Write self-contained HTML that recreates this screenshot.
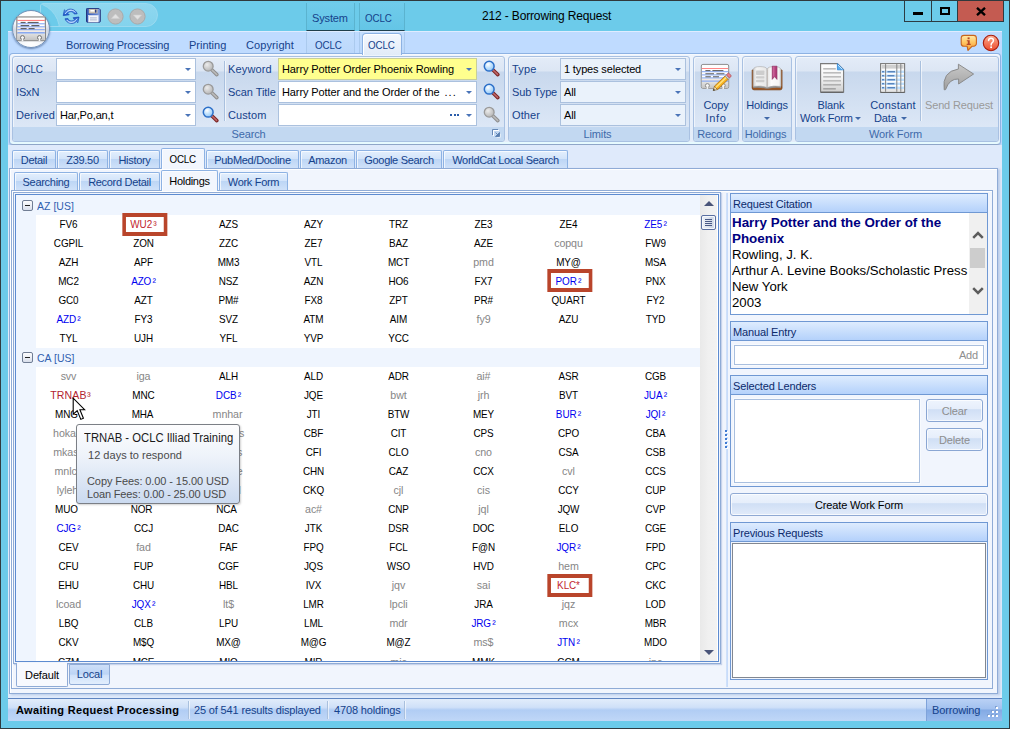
<!DOCTYPE html>
<html>
<head>
<meta charset="utf-8">
<title>212 - Borrowing Request</title>
<style>
*{box-sizing:border-box;margin:0;padding:0}
html,body{width:1010px;height:729px;overflow:hidden}
body{position:relative;background:#6ccbea;font-family:"Liberation Sans",sans-serif;font-size:11px;color:#15428b;line-height:13px}
.abs{position:absolute}
.t{position:absolute;white-space:nowrap;font-size:11px;letter-spacing:-.15px;line-height:13px;height:13px}
.k{color:#000}
/* window frame */
#frame{left:0;top:0;width:1010px;height:729px;border:1px solid #2f3b40;border-top-color:#30383c}
#client{left:8px;top:31px;width:994px;height:690px;background:#bfdbff}
/* ribbon */
#rpanel{left:9px;top:53px;width:992px;height:92px;border:1px solid #8db2e3;border-bottom-color:#8fa6c8;border-radius:4px;background:linear-gradient(#eef4fc,#e3ecf9);box-shadow:inset 0 -2px 0 #e6fafe,inset 0 1px 0 #f6f9fe,0 1px 1px rgba(150,170,205,.55)}
.grp{position:absolute;top:56px;height:86px;border:1px solid #a9c1e2;border-radius:3px;background:linear-gradient(#e3ecf8 0,#dce6f4 14px,#c8d8ed 15px,#dce7f6 70px);box-shadow:inset 1px 1px 0 rgba(255,255,255,.55)}
.grp .cap{position:absolute;left:0;right:0;bottom:0;height:14px;background:#c2d8f1;border-radius:0 0 2px 2px;text-align:center;font-size:11px;letter-spacing:-.15px;line-height:14px;color:#3e6aaa;padding-right:3px}
.cb{position:absolute;height:22px;border:1px solid #abc1de;background:#fff}
.cb.lim{background:#eaf2fb}
.cb .arr{position:absolute;right:4px;top:9px;width:0;height:0;border-left:3px solid transparent;border-right:3px solid transparent;border-top:3px solid #4a74b8}
.cb .v{position:absolute;left:3px;top:4px;font-size:11px;letter-spacing:-.15px;line-height:13px;color:#000;white-space:nowrap}
.vsep{position:absolute;width:1px;background:#a9c0de;box-shadow:1px 0 0 rgba(255,255,255,.6)}
.darr{width:0;height:0;border-left:3px solid transparent;border-right:3px solid transparent;border-top:3px solid #4068a8}

#main{left:8px;top:145px;width:994px;height:553px;background:#dfeafb}
.pnl{position:absolute;border:1px solid #8fabd6;background:#f1f5fd;box-shadow:inset 1px 1px 0 #fff}
.gh{position:absolute;border:1px solid #6f98d3;background:#f1f5fd}
.gh>.h{position:absolute;left:0;right:0;top:0;height:19px;background:linear-gradient(#deecfe,#b4d1fb);border-bottom:1px solid #6f98d3;padding:4px 0 0 2px;font-size:11px;letter-spacing:-.15px;color:#0c2a6b;white-space:nowrap}
.btn{position:absolute;border:1px solid #8aa6d3;border-radius:3px;background:linear-gradient(#eef4fd 0,#e6eefb 42%,#d0dff5 46%,#e1ebfa 100%);text-align:center;font-size:11px;letter-spacing:-.15px;box-shadow:inset 0 0 0 1px rgba(255,255,255,.7)}
#status{left:8px;top:698px;width:994px;height:23px;border-top:1px solid #5f84c1;background:linear-gradient(#e2edfb 0,#cfe0f8 38%,#b1cdf4 50%,#c0d7f7 100%)}

#list .band{position:absolute;left:0;width:684px;height:20px;background:#eff5fe}
#list .ind{position:absolute;left:0;top:0;width:20px;height:466px;background:#eff5fe}
#list .gt{position:absolute;left:21px;font-size:11px;letter-spacing:.05px;color:#2f5fb0;white-space:nowrap;transform:scaleX(.95);transform-origin:0 50%}
#list .mb{position:absolute;left:6px;width:11px;height:11px;border:1px solid #707d94;border-radius:2px;background:linear-gradient(#fdfdfe,#d9dfec)}
#list .mb:after{content:"";position:absolute;left:2px;top:4px;width:5px;height:1px;background:#222}
.r{position:absolute;left:20px;height:19px;width:664px;display:flex}
.r i{display:block;font-style:normal;width:85px;height:19px;line-height:19px;text-align:center;color:#000;font-size:11px;letter-spacing:-.1px;white-space:nowrap;position:relative;transform:scaleX(.9)}
.r i:first-child{width:65px}
.r i:last-child{width:89px}
.r i.b{color:#0000f0}
.r i.g{color:#868686;transform:scaleX(.97)}
.r i.rd{color:#c2262f}
.r i.bx:before{content:"";position:absolute;left:50%;top:-2px;margin-left:-23.9px;width:50px;height:23px;border:4px solid #b9452b;border-left-width:4.44px;border-right-width:4.44px;box-sizing:border-box}
.r i.bx{z-index:2}
.r i b{font-weight:normal;margin-left:1.4px;font-size:11.5px;line-height:0;position:relative;top:1px}
.r i.up:before{top:-3px}
.r i.hov{transform:scaleX(.96);left:2px;letter-spacing:.1px;color:#b2222f}
.r i.hov b{margin-left:.3px}
.cx{display:inline-block;transform:scaleX(.89);transform-origin:0 50%}
/* tabs */
.tab{position:absolute;border:1px solid #8db2e3;border-bottom:none;border-radius:2px 2px 0 0;background:linear-gradient(#e3effd 0,#d3e4fa 45%,#bcd5f5 46%,#cfe1f9 100%);text-align:center;font-size:11px;letter-spacing:-.3px;color:#15428b;box-shadow:inset 1px 1px 0 rgba(255,255,255,.7)}
.tab.sel{background:#f2f6fd;color:#000;z-index:3}
</style>
</head>
<body>
<div id="frame" class="abs"></div>
<div id="client" class="abs"></div>


<!-- TITLE BAR -->
<div class="abs" id="qat" style="left:40px;top:3px;width:118px;height:24px;border-radius:3px 12px 12px 3px;background:linear-gradient(#8fd7ef,#84d3ed);border:1px solid #9adaf0;overflow:hidden"><div class="abs" style="left:-37px;top:-2px;width:56px;height:56px;border-radius:50%;background:#6ccbea;border:1px solid #9adaf0"></div></div>
<!-- refresh icon -->
<svg class="abs" style="left:62px;top:7px" width="18" height="18" viewBox="0 0 18 18">
 <defs><linearGradient id="gr" x1="0" y1="0" x2="0" y2="1"><stop offset="0" stop-color="#9cc6fa"/><stop offset=".5" stop-color="#3f7fe0"/><stop offset="1" stop-color="#1b50c2"/></linearGradient></defs>
 <g id="ra"><path d="M15.2 6.8 C13.6 1.8 6.6 .6 3.8 4.2 L2.4 2.8 L1.2 8.6 L7.2 7.8 L5.6 6.2 C7.8 3.8 11.4 4.4 12.2 7 Z" fill="url(#gr)" stroke="#1747b4" stroke-width=".7" stroke-linejoin="round"/>
 <path d="M3 7 L4.6 5.2 C7 2.6 11.6 2.6 13.4 5.6" fill="none" stroke="#d6e8ff" stroke-width=".9"/></g>
 <use href="#ra" transform="rotate(180 9.1 9.3)"/>
</svg>
<!-- save icon -->
<svg class="abs" style="left:86px;top:8px" width="15" height="15" viewBox="0 0 15 15">
 <defs><linearGradient id="gsv" x1="0" y1="0" x2="1" y2="0"><stop offset="0" stop-color="#3558b4"/><stop offset=".7" stop-color="#5b7fd0"/><stop offset="1" stop-color="#93aee6"/></linearGradient></defs>
 <path d="M.5 1.2 a.8 .8 0 0 1 .8-.8 h11.6 l1.4 1.4 v11.6 a.8 .8 0 0 1 -.8 .8 h-12.2 a.8 .8 0 0 1 -.8-.8 z" fill="url(#gsv)" stroke="#24357c" stroke-width="1"/>
 <rect x="2.8" y="1" width="8.8" height="4.4" fill="#cbbfae"/><rect x="4.4" y="2" width="4" height="1.6" fill="#fff"/><rect x="9" y="1.6" width="1.4" height="3" fill="#2a3f86"/>
 <rect x="2.6" y="7.4" width="9.6" height="6.6" fill="#f4f6fb" stroke="#dfe5f3" stroke-width=".6"/><rect x="4" y="9.4" width="6.8" height="1" fill="#a9b3cc"/><rect x="4" y="11.4" width="6.8" height="1" fill="#a9b3cc"/>
</svg>
<!-- up/down disabled -->
<svg class="abs" style="left:106.5px;top:7.5px" width="17" height="17" viewBox="0 0 17 17"><circle cx="8.5" cy="8.5" r="7.6" fill="#bdbdbd" stroke="#a9a9a9"/><path d="M4.4 10.4 L8.5 6 L12.6 10.4 Z" fill="#e2e2e2" stroke="#d0d0d0" stroke-width=".6"/></svg>
<svg class="abs" style="left:128.5px;top:7.5px" width="17" height="17" viewBox="0 0 17 17"><circle cx="8.5" cy="8.5" r="7.6" fill="#bdbdbd" stroke="#a9a9a9"/><path d="M4.4 7 L8.5 11.4 L12.6 7 Z" fill="#e2e2e2" stroke="#d0d0d0" stroke-width=".6"/></svg>

<!-- context tab headers -->
<div class="abs" style="left:306px;top:3px;width:49px;height:28px;background:linear-gradient(#70cceb,#64c5e6);border-left:1px solid #5bb3cf;border-right:1px solid #5bb3cf;border-bottom:1px solid #1f3f4c"></div>
<div class="abs" style="left:359px;top:3px;width:46px;height:28px;background:linear-gradient(#70cceb,#64c5e6);border-left:1px solid #5bb3cf;border-right:1px solid #5bb3cf;border-bottom:1px solid #1f3f4c"></div>
<div class="t" style="left:312px;top:12px;font-size:11px">System</div>
<div class="t cx" style="left:365px;top:12px;font-size:11px">OCLC</div>
<div class="t k" id="title" style="left:482px;top:9px;font-size:12px;line-height:14px;height:14px">212 - Borrowing Request</div>

<!-- window buttons -->
<div class="abs" style="left:904px;top:1px;width:100px;height:21px;border:1px solid #2c3b42;border-top:none;background:#6ccbea"></div>
<div class="abs" style="left:931px;top:1px;width:1px;height:20px;background:#2c3b42"></div>
<div class="abs" style="left:957px;top:1px;width:46px;height:20px;background:#c45b51;border-left:1px solid #2c3b42"></div>
<div class="abs" style="left:913px;top:12px;width:10px;height:3px;background:#000"></div>
<div class="abs" style="left:940px;top:7px;width:10px;height:8px;border:2px solid #000;border-top-width:2px"></div>
<svg class="abs" style="left:976px;top:7px" width="10" height="9" viewBox="0 0 10 9"><path d="M1 .8 L9 8.2 M9 .8 L1 8.2" stroke="#000" stroke-width="2.3"/></svg>

<!-- ribbon tab row -->
<div class="abs" style="left:306px;top:31px;width:49px;height:22px;background:linear-gradient(#c3defe,#bcd8fb);border-left:1px solid #abcaee;border-right:1px solid #abcaee"></div>
<div class="abs" style="left:359px;top:31px;width:46px;height:22px;background:linear-gradient(#c3defe,#bcd8fb);border-left:1px solid #abcaee;border-right:1px solid #abcaee"></div>
<div class="abs" style="left:362px;top:33px;width:40px;height:22px;border:1px solid #8db2e3;border-bottom:none;border-radius:4px 4px 0 0;background:linear-gradient(#f4f8fe,#e1ebf8);z-index:3;box-shadow:inset 1px 1px 0 #fff"></div>
<div class="t" style="left:66px;top:39px;letter-spacing:-.19px">Borrowing Processing</div>
<div class="t" style="left:189px;top:39px;letter-spacing:0">Printing</div>
<div class="t" style="left:246px;top:39px;letter-spacing:.1px">Copyright</div>
<div class="t cx" style="left:315px;top:39px">OCLC</div>
<div class="t cx" style="left:368px;top:39px;z-index:4">OCLC</div>

<!-- app button -->
<div class="abs" id="appbtn" style="left:12px;top:10px;width:38px;height:38px;border-radius:50%;background:radial-gradient(ellipse 60% 30% at 50% 92%,#fff 0,rgba(255,255,255,0) 100%),linear-gradient(#ffffff 0,#f4f6fa 35%,#d3dae6 52%,#dfe5ee 75%,#f5f7fa 100%);border:1px solid #7391b8;box-shadow:0 1px 2px rgba(40,70,120,.6);z-index:5"></div>
<svg class="abs" style="left:16px;top:16px;z-index:6" width="30" height="26" viewBox="0 0 30 26">
 <defs><linearGradient id="gab" x1="0" y1="0" x2="0" y2="1"><stop offset="0" stop-color="#e2e2e2"/><stop offset="1" stop-color="#c2c2c2"/></linearGradient></defs>
 <rect x=".9" y=".9" width="28.4" height="23.8" rx="1" fill="#fff" stroke="#6e6e6e" stroke-width="1"/>
 <path d="M1 .9 H29.2" stroke="#b9b9b9" stroke-width="1"/>
 <rect x="1.4" y="11.4" width="27.4" height="5.4" fill="#f3ece5"/>
 <rect x="1.4" y="17.4" width="27.4" height="6.8" fill="url(#gab)"/>
 <rect x="1.4" y="3.9" width="27.4" height="1" fill="#ff7474"/>
 <g fill="#79a0f4"><rect x="1.4" y="7.3" width="27.4" height="1"/><rect x="1.4" y="10.3" width="27.4" height="1"/><rect x="1.4" y="13.2" width="27.4" height="1"/><rect x="1.4" y="16.3" width="27.4" height="1.1" fill="#5d8cf0"/></g>
 <g fill="#626262"><rect x="4.6" y="5.9" width="5" height="1.2"/><rect x="11.6" y="5.9" width="11" height="1.2"/><rect x="4.6" y="9" width="8.6" height="1.2"/><rect x="15.4" y="9" width="8" height="1.2"/><rect x="4.6" y="12" width="6" height="1.2"/><rect x="12.6" y="12" width="6" height="1.2"/></g>
 <circle cx="6.5" cy="21.6" r="2" fill="#f4f4f4" stroke="#6e6e6e"/><circle cx="23.5" cy="21.6" r="2" fill="#f4f4f4" stroke="#6e6e6e"/>
 <rect x="5.7" y="22.6" width="1.6" height="2.6" fill="#f4f4f4"/><rect x="22.7" y="22.6" width="1.6" height="2.6" fill="#f4f4f4"/>
</svg>

<!-- info / help icons -->
<svg class="abs" style="left:960px;top:34px" width="18" height="18" viewBox="0 0 18 18">
 <defs><linearGradient id="gi" x1="0" y1="0" x2="0" y2="1"><stop offset="0" stop-color="#ffeaa8"/><stop offset=".45" stop-color="#ffc764"/><stop offset="1" stop-color="#f9972e"/></linearGradient></defs>
 <path d="M4 1.4 h9.6 a2.8 2.8 0 0 1 2.8 2.8 v5.2 a2.8 2.8 0 0 1 -2.8 2.8 h-1.4 l-4.2 4.2 l-.9-4.2 h-3.1 a2.8 2.8 0 0 1 -2.8-2.8 v-5.2 a2.8 2.8 0 0 1 2.8-2.8z" fill="url(#gi)" stroke="#c8651c" stroke-width="1.1" stroke-linejoin="round"/>
 <rect x="7.6" y="3.4" width="2" height="1.8" fill="#b5482a"/><path d="M6.8 6.2 h2.9 v3.6 h1 v1.1 h-4 v-1.1 h1.1 v-2.5 h-1z" fill="#b5482a"/>
</svg>
<svg class="abs" style="left:982px;top:34px" width="18" height="18" viewBox="0 0 18 18">
 <defs><linearGradient id="gh" x1="0" y1="0" x2="0" y2="1"><stop offset="0" stop-color="#fbb39a"/><stop offset=".5" stop-color="#f47a5c"/><stop offset="1" stop-color="#ea4a2c"/></linearGradient></defs>
 <circle cx="9" cy="9" r="7.7" fill="url(#gh)" stroke="#a81c0c" stroke-width="1.1"/>
 <path d="M6.6 6.6 Q6.6 4.2 9 4.2 Q11.4 4.2 11.4 6.4 Q11.4 7.8 10.2 8.6 Q9.1 9.4 9.1 11" fill="none" stroke="#fff" stroke-width="1.5" stroke-linecap="round"/><circle cx="9.1" cy="13.3" r="1" fill="#fff"/>
</svg>
<div class="abs" style="left:8px;top:31px;width:994px;height:1px;background:#dfecff"></div>

<!-- RIBBON PANEL -->
<div id="rpanel" class="abs"></div>


<div class="grp" style="left:12px;width:493px"><div class="cap" style="padding-right:20px">Search</div>
 <svg class="abs" style="right:3px;bottom:3px" width="9" height="9" viewBox="0 0 9 9"><path d="M1.5 7 V1.5 H7" fill="none" stroke="#fff"/><path d="M.5 6 V.5 H6" fill="none" stroke="#6688b5"/><path d="M8.5 4.5 V8.5 H4.5 Z" fill="#fff"/><path d="M7.5 3.5 V7.5 H3.5 Z M3.6 3.6 L6 6" fill="#5a7fb0" stroke="#5a7fb0" stroke-width=".9"/></svg>
</div>
<div class="grp" style="left:508px;width:182px"><div class="cap">Limits</div></div>
<div class="grp" style="left:693px;width:46px"><div class="cap">Record</div></div>
<div class="grp" style="left:742px;width:50px"><div class="cap">Holdings</div></div>
<div class="grp" style="left:795px;width:204px"><div class="cap">Work Form</div></div>

<svg width="0" height="0" style="position:absolute"><defs>
<radialGradient id="gmg" cx=".38" cy=".35" r=".7"><stop offset="0" stop-color="#ececec"/><stop offset=".5" stop-color="#cfcfcf"/><stop offset="1" stop-color="#b4b4b4"/></radialGradient>
<radialGradient id="gmb" cx=".38" cy=".32" r=".75"><stop offset="0" stop-color="#ffffff"/><stop offset=".45" stop-color="#c4e3fd"/><stop offset="1" stop-color="#8cc3f5"/></radialGradient>
</defs></svg>
<!-- search group content -->
<div class="t cx" style="left:16px;top:63px">OCLC</div>
<div class="t" style="left:16px;top:86px">ISxN</div>
<div class="t" style="left:16px;top:109px;letter-spacing:.15px">Derived</div>
<div class="cb" style="left:56px;top:58px;width:140px"><i class="arr"></i></div>
<div class="cb" style="left:56px;top:81px;width:140px"><i class="arr"></i></div>
<div class="cb" style="left:56px;top:104px;width:140px"><span class="v">Har,Po,an,t</span><i class="arr"></i></div>
<svg class="abs" style="left:202px;top:60px" width="17" height="17" viewBox="0 0 17 17"><path d="M9.8 9.8 L14.8 14.6" stroke="#8f8f8f" stroke-width="3.6" stroke-linecap="round"/><path d="M10 10 L14.7 14.5" stroke="#bcbcbc" stroke-width="1.7" stroke-linecap="round"/><circle cx="6.2" cy="6.2" r="4.9" fill="url(#gmg)" stroke="#9a9a9a" stroke-width="1.3"/></svg><svg class="abs" style="left:202px;top:83px" width="17" height="17" viewBox="0 0 17 17"><path d="M9.8 9.8 L14.8 14.6" stroke="#8f8f8f" stroke-width="3.6" stroke-linecap="round"/><path d="M10 10 L14.7 14.5" stroke="#bcbcbc" stroke-width="1.7" stroke-linecap="round"/><circle cx="6.2" cy="6.2" r="4.9" fill="url(#gmg)" stroke="#9a9a9a" stroke-width="1.3"/></svg><svg class="abs" style="left:202px;top:106px" width="17" height="17" viewBox="0 0 17 17"><path d="M9.8 9.8 L14.8 14.6" stroke="#7c2626" stroke-width="3.6" stroke-linecap="round"/><path d="M10 10 L14.6 14.4" stroke="#c06868" stroke-width="1.5" stroke-linecap="round"/><circle cx="6.2" cy="6.2" r="4.9" fill="url(#gmb)" stroke="#2c6fc8" stroke-width="1.5"/></svg>
<div class="vsep" style="left:224px;top:61px;height:60px"></div>
<div class="t" style="left:228px;top:63px;letter-spacing:.15px">Keyword</div>
<div class="t" style="left:228px;top:86px;letter-spacing:-.05px">Scan Title</div>
<div class="t" style="left:228px;top:109px;letter-spacing:.1px">Custom</div>
<div class="cb" style="left:278px;top:58px;width:199px;background:#ffff8e;border-color:#c8cf9a"><span class="v" style="letter-spacing:-.1px">Harry Potter Order Phoenix Rowling</span><i class="arr"></i></div>
<div class="cb" style="left:278px;top:81px;width:199px"><span class="v" style="letter-spacing:-.1px">Harry Potter and the Order of the<span style="letter-spacing:1px;margin-left:5px">...</span></span><i class="arr"></i></div>
<div class="cb" style="left:278px;top:104px;width:199px"><span class="abs" style="right:17px;top:9px;width:9px;height:2px;background:repeating-linear-gradient(90deg,#2b5dab 0 2px,transparent 2px 3.5px)"></span><i class="arr"></i></div>
<svg class="abs" style="left:483px;top:60px" width="17" height="17" viewBox="0 0 17 17"><path d="M9.8 9.8 L14.8 14.6" stroke="#7c2626" stroke-width="3.6" stroke-linecap="round"/><path d="M10 10 L14.6 14.4" stroke="#c06868" stroke-width="1.5" stroke-linecap="round"/><circle cx="6.2" cy="6.2" r="4.9" fill="url(#gmb)" stroke="#2c6fc8" stroke-width="1.5"/></svg><svg class="abs" style="left:483px;top:83px" width="17" height="17" viewBox="0 0 17 17"><path d="M9.8 9.8 L14.8 14.6" stroke="#7c2626" stroke-width="3.6" stroke-linecap="round"/><path d="M10 10 L14.6 14.4" stroke="#c06868" stroke-width="1.5" stroke-linecap="round"/><circle cx="6.2" cy="6.2" r="4.9" fill="url(#gmb)" stroke="#2c6fc8" stroke-width="1.5"/></svg><svg class="abs" style="left:483px;top:106px" width="17" height="17" viewBox="0 0 17 17"><path d="M9.8 9.8 L14.8 14.6" stroke="#8f8f8f" stroke-width="3.6" stroke-linecap="round"/><path d="M10 10 L14.7 14.5" stroke="#bcbcbc" stroke-width="1.7" stroke-linecap="round"/><circle cx="6.2" cy="6.2" r="4.9" fill="url(#gmg)" stroke="#9a9a9a" stroke-width="1.3"/></svg>
<!-- limits -->
<div class="t" style="left:512px;top:63px;letter-spacing:.2px">Type</div>
<div class="t" style="left:512px;top:86px">Sub Type</div>
<div class="t" style="left:512px;top:109px;letter-spacing:.1px">Other</div>
<div class="cb lim" style="left:560px;top:58px;width:126px"><span class="v">1 types selected</span><i class="arr"></i></div>
<div class="cb lim" style="left:560px;top:81px;width:126px"><span class="v">All</span><i class="arr"></i></div>
<div class="cb lim" style="left:560px;top:104px;width:126px"><span class="v">All</span><i class="arr"></i></div>

<!-- big buttons labels -->
<div class="t" style="left:693px;top:99px;width:46px;text-align:center">Copy</div>
<div class="t" style="left:693px;top:112px;width:46px;text-align:center;letter-spacing:.7px">Info</div>
<div class="t" style="left:742px;top:99px;width:50px;text-align:center">Holdings</div>
<i class="abs darr" style="left:764px;top:117px"></i>
<div class="t" style="left:801px;top:99px;width:60px;text-align:center">Blank</div>
<div class="t" style="left:800px;top:112px">Work Form</div>
<i class="abs darr" style="left:855px;top:117px"></i>
<div class="t" style="left:870px;top:99px;width:46px;text-align:center;letter-spacing:.2px">Constant</div>
<div class="t" style="left:874px;top:112px">Data</div>
<i class="abs darr" style="left:901px;top:117px"></i>
<div class="vsep" style="left:920px;top:61px;height:60px"></div>
<div class="t" style="left:925px;top:99px;color:#9a9a9a">Send Request</div>


<!-- Copy Info icon -->
<svg class="abs" style="left:700px;top:62px" width="32" height="30" viewBox="0 0 32 30">
 <defs><linearGradient id="gcb" x1="0" y1="0" x2="0" y2="1"><stop offset="0" stop-color="#e4e4e4"/><stop offset="1" stop-color="#c4c4c4"/></linearGradient></defs>
 <rect x="1.3" y="2.4" width="27.4" height="24" rx="1.6" fill="#fdfdfd" stroke="#8c8c8c" stroke-width="1"/>
 <rect x="1.8" y="19.6" width="26.4" height="6.6" fill="url(#gcb)"/>
 <rect x="1.8" y="16.4" width="26.4" height="2.4" fill="#efe8e2"/>
 <rect x="1.8" y="6" width="26.4" height="1" fill="#ff8585"/>
 <g fill="#7ea2f2"><rect x="1.8" y="9.2" width="26.4" height="1"/><rect x="1.8" y="12.4" width="26.4" height="1"/><rect x="1.8" y="15.4" width="26.4" height="1"/><rect x="1.8" y="18.6" width="26.4" height="1" fill="#6f97ee"/></g>
 <g fill="#6a6a6a"><rect x="5.4" y="8" width="5" height="1.1"/><rect x="12.4" y="8" width="11" height="1.1"/><rect x="5.4" y="11.2" width="8.6" height="1.1"/><rect x="16.4" y="11.2" width="8" height="1.1"/><rect x="5.4" y="14.2" width="5.4" height="1.1"/><rect x="13" y="14.2" width="6" height="1.1"/></g>
 <circle cx="7.4" cy="23.6" r="2" fill="#f6f6f6" stroke="#8c8c8c"/><circle cx="23.2" cy="23.6" r="2" fill="#f6f6f6" stroke="#8c8c8c"/>
 <rect x="6.6" y="24.6" width="1.6" height="2.4" fill="#f0f0f0"/><rect x="22.4" y="24.6" width="1.6" height="2.4" fill="#f0f0f0"/>
 <g transform="translate(13.2,28.6) rotate(-44)"><path d="M0 0 L4 -2.3 L4 2.3 Z" fill="#f6ddb0" stroke="#6e5220" stroke-width=".6"/><path d="M0 0 L1.7 -1 L1.7 1 Z" fill="#222"/><rect x="4" y="-2.3" width="14.6" height="4.6" fill="#f7b21e" stroke="#a5660c" stroke-width=".7"/><rect x="4" y="-1.2" width="14.6" height="1.5" fill="#ffe07a"/><rect x="18.6" y="-2.3" width="1.8" height="4.6" fill="#d0d0d0" stroke="#7c7c7c" stroke-width=".5"/><rect x="20.4" y="-2.3" width="3" height="4.6" rx="1.2" fill="#ea7f86" stroke="#a3424a" stroke-width=".6"/></g>
</svg>
<!-- Holdings (book) icon -->
<svg class="abs" style="left:751px;top:64px" width="32" height="28" viewBox="0 0 32 28">
 <defs><linearGradient id="gpl" x1="0" y1="0" x2="1" y2="0"><stop offset="0" stop-color="#cfcfcf"/><stop offset=".25" stop-color="#f4f4f4"/><stop offset="1" stop-color="#e6e6e6"/></linearGradient>
 <linearGradient id="gpr" x1="0" y1="0" x2="1" y2="0"><stop offset="0" stop-color="#e2e2e2"/><stop offset=".3" stop-color="#fdfdfd"/><stop offset=".85" stop-color="#f4f4f4"/><stop offset="1" stop-color="#cfcfcf"/></linearGradient></defs>
 <path d="M1.2 6 V24 Q1.2 25.8 3 25.8 H29.2 Q31 25.8 31 24 V6 Z" fill="#9a5420" stroke="#7a3e10" stroke-width=".8"/>
 <path d="M2.2 22 H30 V24 Q23 23.4 17 24.8 H15.2 Q9 23.4 2.2 24 Z" fill="#8d8d8d"/>
 <path d="M2.2 22.4 V5.4 Q3 2.6 9 2.6 Q15 2.6 16 5 V23.4 Q10 21.2 2.2 22.4 Z" fill="url(#gpl)" stroke="#a8a8a8" stroke-width=".6"/>
 <path d="M30 22.4 V5.4 Q29.2 2.6 23.2 2.6 Q17.2 2.6 16.2 5 V23.4 Q22.2 21.2 30 22.4 Z" fill="url(#gpr)" stroke="#a8a8a8" stroke-width=".6"/>
 <g fill="#cdcdcd"><rect x="5" y="6.4" width="8.4" height="4.6" rx=".8"/><rect x="5" y="12.2" width="8.4" height="2.4" rx=".8"/><rect x="5" y="15.8" width="8.4" height="2.4" rx=".8"/></g>
 <path d="M21.2 2.2 H26 V15.4 L23.6 12.6 L21.2 15.4 Z" fill="#b3417c" stroke="#8c2a5c" stroke-width=".6"/><rect x="22.2" y="2.6" width="1.2" height="10" fill="#cf6a9f"/>
</svg>
<!-- Blank Work Form icon -->
<svg class="abs" style="left:819px;top:62px" width="26" height="31" viewBox="0 0 26 31">
 <defs><linearGradient id="gdoc" x1="0" y1="0" x2="0" y2="1"><stop offset="0" stop-color="#ffffff"/><stop offset=".5" stop-color="#f3f3f3"/><stop offset="1" stop-color="#cfcfcf"/></linearGradient></defs>
 <path d="M1.6 1.6 H18.4 L24.6 7.8 V30 H1.6 Z" fill="url(#gdoc)" stroke="#7a7a7a" stroke-width="1.1"/>
 <path d="M1.6 30.4 H24.6" stroke="#5e5e5e" stroke-width="1"/>
 <path d="M18.4 1.6 V7.8 H24.6 Z" fill="#5aaef0" stroke="#2f86d8" stroke-width=".8" stroke-linejoin="round"/><path d="M19 3 L23.4 7.4" stroke="#d5ecff" stroke-width=".9"/>
 <g fill="#bcbcbc"><rect x="4.2" y="6" width="12.6" height="1.6"/><rect x="4.2" y="10" width="17.8" height="1.6"/><rect x="4.2" y="14" width="17.8" height="1.6"/><rect x="4.2" y="18" width="17.8" height="1.6"/><rect x="4.2" y="22" width="17.8" height="1.6" fill="#b0b0b0"/><rect x="4.2" y="26" width="12.6" height="1.6" fill="#a4a4a4"/></g>
</svg>
<!-- Constant Data icon -->
<svg class="abs" style="left:879px;top:62px" width="27" height="31" viewBox="0 0 27 31">
 <rect x="1.6" y="1.6" width="24" height="28.6" fill="#fcfcfc" stroke="#7a7a7a" stroke-width="1.1"/>
 <path d="M1.6 30.4 H25.6" stroke="#5e5e5e" stroke-width="1"/>
 <rect x="2.6" y="3" width="22" height="3.6" fill="#cfcfcf"/><rect x="2.6" y="27" width="22" height="2.6" fill="#e6e6e6"/>
 <g fill="#bfe0ff"><rect x="2.2" y="8.6" width="22.8" height="2.4"/><rect x="2.2" y="12.6" width="22.8" height="2.4"/><rect x="2.2" y="16.6" width="22.8" height="2.4"/><rect x="2.2" y="20.6" width="22.8" height="2.4"/><rect x="2.2" y="24.6" width="22.8" height="2.4"/></g>
 <g fill="#2f5f9f"><rect x="3" y="9.3" width="2.2" height="1"/><rect x="8.4" y="9.3" width="7.6" height="1"/><rect x="3" y="13.3" width="2.2" height="1"/><rect x="8.4" y="13.3" width="7" height="1"/><rect x="3" y="17.3" width="2.2" height="1"/><rect x="8.4" y="17.3" width="7.6" height="1"/><rect x="3" y="21.3" width="2.2" height="1"/><rect x="8.4" y="21.3" width="7" height="1"/><rect x="3" y="25.3" width="2.2" height="1"/><rect x="8.4" y="25.3" width="7.6" height="1"/></g>
 <path d="M6.6 2 V29.8 M17.8 2 V29.8 M21.8 2 V29.8" stroke="#848484" stroke-width="1"/>
</svg>
<!-- Send Request icon (disabled arrow) -->
<svg class="abs" style="left:942px;top:63px" width="33" height="29" viewBox="0 0 33 29">
 <defs><linearGradient id="gs" x1="0" y1="0" x2="0" y2="1"><stop offset="0" stop-color="#c8c8c8"/><stop offset=".5" stop-color="#b4b4b4"/><stop offset="1" stop-color="#9e9e9e"/></linearGradient></defs>
 <path d="M16.4 1.2 L31.6 11 L16.6 21 V16 Q7.4 15.4 3.6 26.6 L2.2 26.8 Q-0.4 8.6 16.4 6 Z" fill="url(#gs)" stroke="#858585" stroke-width=".9" stroke-linejoin="round"/>
</svg>



<div id="main" class="abs"></div>
<div class="pnl" style="left:9px;top:168px;width:989px;height:526px;box-shadow:inset 1px 1px 0 #fff,2px 1px 2px rgba(120,150,200,.35)"></div>
<div class="tab" style="left:12px;top:150px;width:44px;height:18px;padding-top:3px">Detail</div>
<div class="tab" style="left:57px;top:150px;width:51px;height:18px;padding-top:3px">Z39.50</div>
<div class="tab" style="left:109px;top:150px;width:51px;height:18px;padding-top:3px">History</div>
<div class="tab sel" style="left:161px;top:148px;width:44px;height:21px;padding-top:4px"><span class="cx" style="transform-origin:50% 50%">OCLC</span></div>
<div class="tab" style="left:206px;top:150px;width:93px;height:18px;padding-top:3px">PubMed/Docline</div>
<div class="tab" style="left:300px;top:150px;width:55px;height:18px;padding-top:3px">Amazon</div>
<div class="tab" style="left:356px;top:150px;width:86px;height:18px;padding-top:3px">Google Search</div>
<div class="tab" style="left:443px;top:150px;width:125px;height:18px;padding-top:3px">WorldCat Local Search</div>
<div class="pnl" style="left:11px;top:190px;width:982px;height:499px"></div>
<div class="tab" style="left:14px;top:172px;width:64px;height:18px;padding-top:3px">Searching</div>
<div class="tab" style="left:79px;top:172px;width:81px;height:18px;padding-top:3px">Record Detail</div>
<div class="tab sel" style="left:161px;top:170px;width:57px;height:21px;padding-top:4px">Holdings</div>
<div class="tab" style="left:219px;top:172px;width:69px;height:18px;padding-top:3px">Work Form</div>

<!-- left tab page + list -->
<div class="pnl" style="left:13px;top:192px;width:708px;height:472px;border-color:#8fabd6;box-shadow:1px 1px 1px rgba(120,150,200,.35)"></div>
<div id="list" class="abs" style="left:15px;top:194px;width:704px;height:468px;border:1px solid #5d8bd0;background:#fff;overflow:hidden">
<div class="ind"></div>
<div class="band" style="top:0"></div><i class="mb" style="top:5px"></i><div class="gt" style="top:5px">AZ [US]</div>
<div class="r" style="top:20px"><i>FV6</i><i class="rd bx">WU2<b>³</b></i><i>AZS</i><i>AZY</i><i>TRZ</i><i>ZE3</i><i>ZE4</i><i class="b">ZE5<b>²</b></i></div>
<div class="r" style="top:39px"><i>CGPIL</i><i>ZON</i><i>ZZC</i><i>ZE7</i><i>BAZ</i><i>AZE</i><i class="g">copqu</i><i>FW9</i></div>
<div class="r" style="top:58px"><i>AZH</i><i>APF</i><i>MM3</i><i>VTL</i><i>MCT</i><i class="g">pmd</i><i>MY@</i><i>MSA</i></div>
<div class="r" style="top:77px"><i>MC2</i><i class="b">AZO<b>²</b></i><i>NSZ</i><i>AZN</i><i>HO6</i><i>FX7</i><i class="b bx up">POR<b>²</b></i><i>PNX</i></div>
<div class="r" style="top:96px"><i>GC0</i><i>AZT</i><i>PM#</i><i>FX8</i><i>ZPT</i><i>PR#</i><i>QUART</i><i>FY2</i></div>
<div class="r" style="top:115px"><i class="b">AZD<b>²</b></i><i>FY3</i><i>SVZ</i><i>ATM</i><i>AIM</i><i class="g">fy9</i><i>AZU</i><i>TYD</i></div>
<div class="r" style="top:134px"><i>TYL</i><i>UJH</i><i>YFL</i><i>YVP</i><i>YCC</i><i></i><i></i><i></i></div>
<div class="band" style="top:153px;height:19px"></div><i class="mb" style="top:157px"></i><div class="gt" style="top:157px">CA [US]</div>
<div class="r" style="top:172px"><i class="g">svv</i><i class="g">iga</i><i>ALH</i><i>ALD</i><i>ADR</i><i class="g">ai#</i><i>ASR</i><i>CGB</i></div>
<div class="r" style="top:191px"><i class="rd hov">TRNAB<b>³</b></i><i>MNC</i><i class="b">DCB<b>²</b></i><i>JQE</i><i class="g">bwt</i><i class="g">jrh</i><i>BVT</i><i class="b">JUA<b>²</b></i></div>
<div class="r" style="top:210px"><i style="left:-1.7px">MNG</i><i style="left:-1.5px">MHA</i><i class="g" style="left:-1.2px">mnhar</i><i>JTI</i><i>BTW</i><i>MEY</i><i class="b">BUR<b>²</b></i><i class="b">JQI<b>²</b></i></div>
<div class="r" style="top:229px"><i class="g">hokain</i><i>MRJ</i><i class="g">mnhas</i><i>CBF</i><i>CIT</i><i>CPS</i><i>CPO</i><i>CBA</i></div>
<div class="r" style="top:248px"><i class="g">mkasc</i><i>MRK</i><i class="g">mnlcs</i><i>CFI</i><i>CLO</i><i class="g">cno</i><i>CSA</i><i>CSB</i></div>
<div class="r" style="top:267px"><i class="g">mnlcg</i><i>MRL</i><i class="g">mnlce</i><i>CHN</i><i>CAZ</i><i>CCX</i><i class="g">cvl</i><i>CCS</i></div>
<div class="r" style="top:286px"><i class="g">lylehi</i><i>MRM</i><i class="g">mnlcl</i><i>CKQ</i><i class="g">cjl</i><i class="g">cis</i><i>CCY</i><i>CUP</i></div>
<div class="r" style="top:305px"><i style="left:-1.7px">MUO</i><i style="left:-1.7px">NOR</i><i style="left:-1.7px">NCA</i><i class="g">ac#</i><i>CNP</i><i class="g">jql</i><i>JQW</i><i>CVP</i></div>
<div class="r" style="top:324px"><i class="b">CJG<b>²</b></i><i>CCJ</i><i>DAC</i><i>JTK</i><i>DSR</i><i>DOC</i><i>ELO</i><i>CGE</i></div>
<div class="r" style="top:343px"><i>CEV</i><i class="g">fad</i><i>FAF</i><i>FPQ</i><i>FCL</i><i>F@N</i><i class="b">JQR<b>²</b></i><i>FPD</i></div>
<div class="r" style="top:362px"><i>CFU</i><i>FUP</i><i>CGF</i><i>JQS</i><i>WSO</i><i>HVD</i><i class="g">hem</i><i>CPC</i></div>
<div class="r" style="top:381px"><i>EHU</i><i>CHU</i><i>HBL</i><i>IVX</i><i class="g">jqv</i><i class="g">sai</i><i class="rd bx">KLC*</i><i>CKC</i></div>
<div class="r" style="top:400px"><i class="g">lcoad</i><i class="b">JQX<b>²</b></i><i class="g">lt$</i><i>LMR</i><i class="g">lpcli</i><i>JRA</i><i class="g">jqz</i><i>LOD</i></div>
<div class="r" style="top:419px"><i>LBQ</i><i>CLB</i><i>LPU</i><i>LML</i><i class="g">mdr</i><i class="b">JRG<b>²</b></i><i class="g">mcx</i><i>MBR</i></div>
<div class="r" style="top:438px"><i>CKV</i><i>M$Q</i><i>MX@</i><i>M@G</i><i>M@Z</i><i class="g">ms$</i><i class="b">JTN<b>²</b></i><i>MDO</i></div>
<div class="r" style="top:458px"><i>CZM</i><i>MCE</i><i>MIO</i><i>MIR</i><i class="g">mic</i><i>MMK</i><i>CCM</i><i class="g">jnc</i></div>
<!-- scrollbar -->
<div class="abs" style="left:684px;top:0;width:18px;height:466px;background:linear-gradient(90deg,#e9e9e9,#f0f0f0 50%,#f2f2f2);border-right:1px solid #fff"></div>
<div class="abs" style="left:688px;top:6px;width:0;height:0;border-left:5px solid transparent;border-right:5px solid transparent;border-bottom:5px solid #4a5478"></div>
<div class="abs" style="left:688px;top:455px;width:0;height:0;border-left:5px solid transparent;border-right:5px solid transparent;border-top:5px solid #4a5478"></div>
<div class="abs" style="left:685px;top:20px;width:15px;height:15px;border:1px solid #5a6fa0;border-radius:2px;background:linear-gradient(90deg,#eef1f7,#dfe5ef 50%,#cdd6e4 75%,#e6eaf2);box-shadow:inset 0 0 0 1px #f6f8fb"></div>
<div class="abs" style="left:689px;top:24px;width:7px;height:7px;background:repeating-linear-gradient(#4a5a86 0 1px,transparent 1px 2px)"></div>

</div>
<!-- bottom tabs -->
<div class="abs" style="left:16px;top:663px;width:52px;height:24px;border:1px solid #8fabd6;border-top:none;border-radius:0 0 2px 2px;background:#f7f9fe;text-align:center;color:#000;font-size:11px;letter-spacing:-.15px;padding-top:6px;z-index:3">Default</div>
<div class="abs" style="left:69px;top:664px;width:41px;height:21px;border:1px solid #8fabd6;border-radius:0 0 2px 2px;background:linear-gradient(#cddff8 0,#bcd4f5 48%,#d0e2fa 54%,#e2eefd 100%);text-align:center;font-size:11px;letter-spacing:-.15px;padding-top:3px">Local</div>
<!-- splitter -->
<div class="abs" style="left:726px;top:193px;width:2px;height:494px;background:linear-gradient(90deg,#d3e3fb,#c4d9f9)"></div>
<div class="abs" style="left:726px;top:431px;width:2px;height:18px;background:repeating-linear-gradient(#fff 0 2px,transparent 2px 4px)"></div><div class="abs" style="left:725px;top:430px;width:2px;height:18px;background:repeating-linear-gradient(#3f7ad2 0 2px,transparent 2px 4px)"></div>

<!-- right groups -->
<div class="gh" style="left:730px;top:193px;width:258px;height:122px"><div class="h">Request Citation</div>
 <div class="abs" style="left:0;top:19px;right:0;bottom:0;background:#fff"></div>
 <div class="abs" id="cit" style="left:1px;top:21px;font-family:'Liberation Sans',sans-serif;font-size:13.2px;line-height:16px;color:#000;white-space:nowrap"><b style="color:#00007f;font-size:13.4px">Harry Potter and the Order of the<br>Phoenix</b><br>Rowling, J. K.<br>Arthur A. Levine Books/Scholastic Press<br>New York<br>2003</div>
 <div class="abs" style="right:0;top:19px;width:18px;bottom:0;background:#f0f0f0"></div>
 <svg class="abs" style="right:3px;top:37px" width="12" height="8" viewBox="0 0 12 8"><path d="M1.2 6.8 L6 2 L10.8 6.8" fill="none" stroke="#5c5c5c" stroke-width="2.5"/></svg>
 <div class="abs" style="right:2px;top:54px;width:15px;height:20px;background:#cdcdcd"></div>
 <svg class="abs" style="right:3px;top:93px" width="12" height="8" viewBox="0 0 12 8"><path d="M1.2 1.2 L6 6 L10.8 1.2" fill="none" stroke="#5c5c5c" stroke-width="2.5"/></svg>
</div>
<div class="gh" style="left:730px;top:321px;width:258px;height:48px"><div class="h">Manual Entry</div>
 <div class="abs" style="left:3px;top:23px;width:250px;height:20px;border:1px solid #a9bfdf;background:#fff;box-shadow:0 0 0 1px #f7fafe"></div>
 <div class="t" style="right:9px;top:27px;color:#8e8e8e">Add</div>
</div>
<div class="gh" style="left:730px;top:375px;width:258px;height:112px"><div class="h">Selected Lenders</div>
 <div class="abs" style="left:3px;top:23px;width:186px;height:84px;border:1px solid #a9bfdf;background:#fff;box-shadow:0 0 0 1px #f7fafe"></div>
 <div class="btn" style="left:195px;top:23px;width:57px;height:23px;padding-top:5px;color:#8e8e8e">Clear</div>
 <div class="btn" style="left:195px;top:52px;width:57px;height:23px;padding-top:5px;color:#8e8e8e">Delete</div>
</div>
<div class="btn" style="left:730px;top:493px;width:258px;height:23px;padding-top:5px;color:#000;border-color:#8fa9d4">Create Work Form</div>
<div class="gh" style="left:730px;top:522px;width:258px;height:158px"><div class="h">Previous Requests</div>
 <div class="abs" style="left:1px;top:20px;width:254px;height:135px;border:1px solid #828790;background:#fff"></div>
</div>

<!-- status bar -->
<div id="status" class="abs"></div>
<div class="t k" style="left:16px;top:704px;font-weight:bold;letter-spacing:.33px">Awaiting Request Processing</div>
<div class="vsep" style="left:188px;top:701px;height:18px"></div>
<div class="t" style="left:194px;top:704px">25 of 541 results displayed</div>
<div class="vsep" style="left:327px;top:701px;height:18px"></div>
<div class="t" style="left:334px;top:704px">4708 holdings</div>
<div class="vsep" style="left:404px;top:701px;height:18px"></div>
<div class="abs" style="left:926px;top:699px;width:76px;height:22px;border-left:1px solid #7fa3da;background:linear-gradient(#bad1f5 0,#a2c1ef 45%,#83aae4 50%,#99bbed 100%)"></div>
<div class="t" style="left:932px;top:704px">Borrowing</div>
<svg class="abs" style="left:987px;top:706px" width="12" height="12" viewBox="0 0 12 12"><g fill="#7f9fd0"><rect x="8" y="0" width="2" height="2"/><rect x="4" y="4" width="2" height="2"/><rect x="8" y="4" width="2" height="2"/><rect x="0" y="8" width="2" height="2"/><rect x="4" y="8" width="2" height="2"/><rect x="8" y="8" width="2" height="2"/></g><g fill="#fff"><rect x="9" y="1" width="2" height="2"/><rect x="5" y="5" width="2" height="2"/><rect x="9" y="5" width="2" height="2"/><rect x="1" y="9" width="2" height="2"/><rect x="5" y="9" width="2" height="2"/><rect x="9" y="9" width="2" height="2"/></g></svg>


<!-- tooltip -->
<div class="abs" style="left:76px;top:424px;width:164px;height:80px;border:1px solid #7b7f86;border-radius:3px;background:linear-gradient(#fdfdfe 0,#eef3fa 40%,#cbdaf0 100%);z-index:20;box-shadow:1px 1px 2px rgba(0,0,0,.18)"></div>
<div class="t" style="left:84px;top:431px;font-size:12px;letter-spacing:0;color:#1a1a1a;z-index:21;line-height:14px;height:14px;transform:scaleX(.94);transform-origin:0 50%">TRNAB - OCLC Illiad Training</div>
<div class="t" style="left:88px;top:449px;color:#4a4a4a;z-index:21;letter-spacing:.02px">12 days to respond</div>
<div class="t" style="left:87px;top:475px;color:#4a4a4a;z-index:21;letter-spacing:-.09px">Copy Fees: 0.00 - 15.00 USD</div>
<div class="t" style="left:87px;top:488px;color:#4a4a4a;z-index:21">Loan Fees: 0.00 - 25.00 USD</div>
<!-- mouse cursor -->
<svg class="abs" style="left:72px;top:397px;z-index:30" width="14" height="24" viewBox="0 0 14 24"><path d="M1.2 1.2 V17.2 L5.2 13.6 L8.8 22.4 L11.4 21.3 L7.9 12.7 H12.6 Z" fill="#fff" stroke="#000" stroke-width="1.1" stroke-linejoin="miter"/></svg>

</body>
</html>
